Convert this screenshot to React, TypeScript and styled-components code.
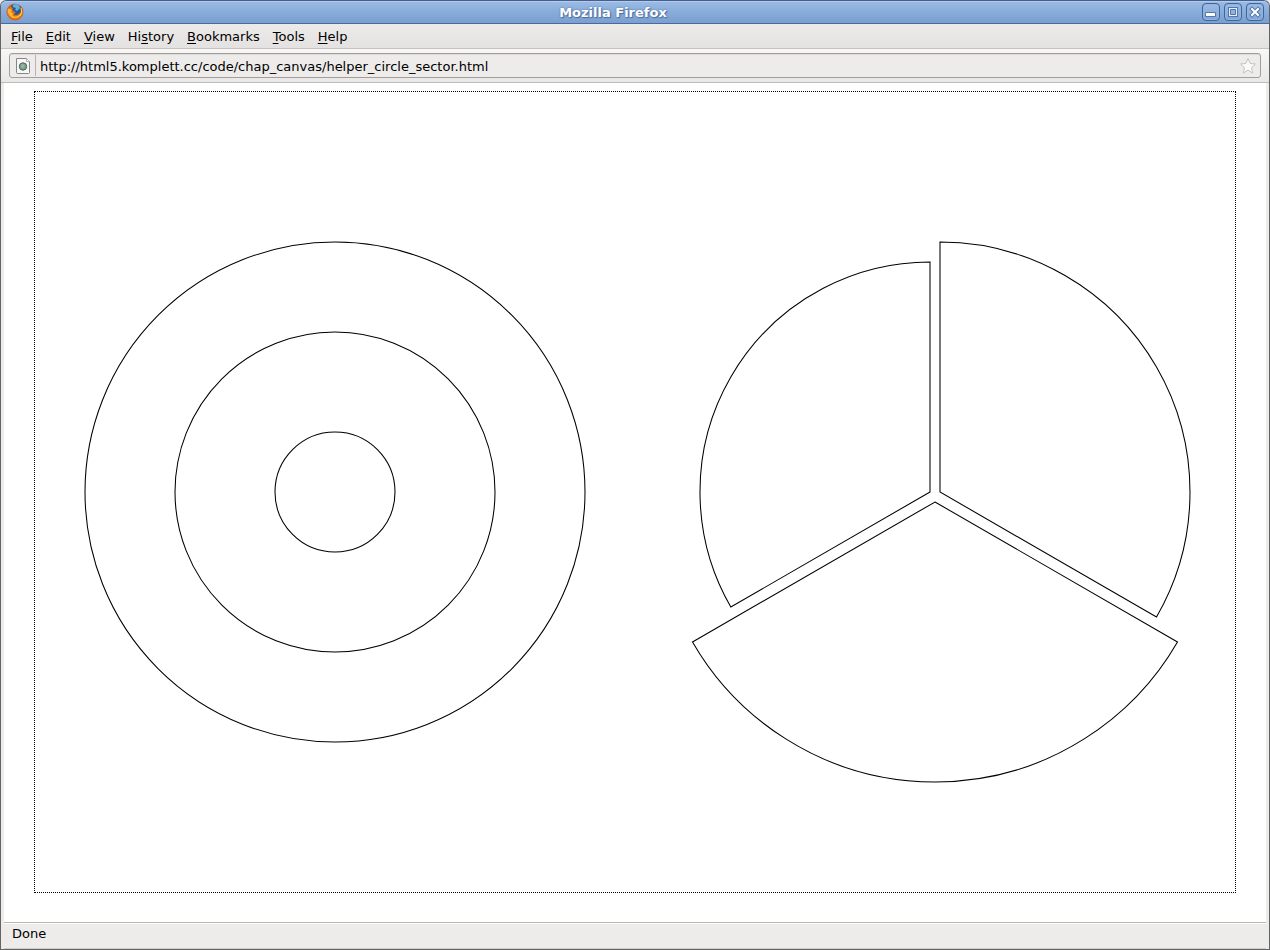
import React from "react";
import styled, { createGlobalStyle } from "styled-components";

const GlobalStyle = createGlobalStyle`
  * { box-sizing: border-box; }
  html, body { margin: 0; padding: 0; }
  body {
    background: #edeceb;
    color: #000;
    font: 13px/16px "DejaVu Sans", Verdana, sans-serif;
  }
`;

const Window = styled.div`
  display: flex;
  flex-direction: column;
  min-height: 100vh;
  background: #edeceb;
  border: 1px solid #646464;
  border-top: 0;
  border-radius: 6px 6px 0 0;
  overflow: hidden;
`;

const TitleBar = styled.header`
  display: flex;
  align-items: center;
  height: 24px;
  margin: 0 -1px;
  padding: 0 5px;
  background: linear-gradient(#9dbbe4, #89aedc 45%, #7a9fd0);
  border: 1px solid #42618e;
  border-bottom-color: #4a6b98;
  border-radius: 6px 6px 0 0;
  box-shadow: inset 0 1px #b4cbec;
`;

const Title = styled.h1`
  flex: 1;
  margin: 0;
  padding-top: 1px;
  font-size: 13px;
  line-height: 16px;
  font-weight: bold;
  text-align: center;
  color: #fff;
  text-shadow: 0 0 2px #4a6d9e, 1px 1px 1px #4a6d9e;
`;

const WindowControls = styled.div`
  display: flex;
  gap: 4px;
`;

const ControlButton = styled.button`
  display: block;
  width: 18px;
  height: 18px;
  padding: 0;
  border: 1px solid #41659a;
  border-radius: 4px;
  background: linear-gradient(#9dbbe4, #7fa5d6);
  box-shadow: inset 0 0 0 1px #94b4df;

  svg { display: block; }
`;

const MenuBar = styled.nav`
  display: flex;
  gap: 13px;
  height: 25px;
  padding: 5px 10px;
  background: linear-gradient(#edebea, #e4e2e0);
  border-bottom: 1px solid #c5c2bf;
`;

const MenuItem = styled.button`
  padding: 0;
  border: 0;
  background: none;
  color: inherit;
  font: inherit;

  u { text-underline-offset: 2px; text-decoration-thickness: 1px; text-decoration-skip-ink: none; }
`;

const Toolbar = styled.div`
  padding: 4px 8px;
  background: linear-gradient(#f8f7f6, #eae8e7);
  border-bottom: 1px solid #bebbb8;
`;

const AddressField = styled.form`
  display: flex;
  align-items: center;
  height: 25px;
  border: 1px solid #a09d9a;
  border-radius: 3px;
  background: #edeceb;
  box-shadow: inset 0 1px #dddbd9;
`;

const SiteIcon = styled.span`
  display: flex;
  align-items: center;
  justify-content: center;
  width: 26px;
  height: 21px;
  border-right: 1px solid #b5b2af;
`;

const AddressInput = styled.input`
  flex: 1;
  min-width: 0;
  height: 22px;
  padding: 2px 4px 0;
  border: 0;
  outline: 0;
  background: transparent;
  color: inherit;
  font: inherit;
`;

const BookmarkButton = styled.button`
  width: 18px;
  height: 18px;
  margin-right: 3px;
  padding: 0;
  border: 0;
  background: none;

  svg { display: block; }
`;

const Page = styled.main`
  flex: 1;
  margin: 0 3px;
  padding: 8px;
  background: #fff;
`;

const Drawing = styled.svg`
  display: block;
  width: 100%;
  max-width: 1202px;
  height: auto;
  margin: 0 auto;
  border: 1px dotted #000;
`;

const StatusBar = styled.footer`
  height: 27px;
  padding: 3px 8px;
  margin: 0 3px;
  background: #edeceb;
  border-top: 1px solid #b8b5b2;
  border-bottom: 1px solid #d0cecb;
  box-shadow: inset 0 1px #fff;
`;

const FirefoxIcon = () => (
  <svg width="18" height="18" viewBox="0 0 18 18" aria-hidden="true">
    <circle cx="9" cy="9" r="8" fill="#d8540c" stroke="#a8441c" strokeWidth="0.6" />
    <circle cx="9.500" cy="7" r="5.500" fill="#245a96" />
    <path d="M7 2q3-2 6 0l1 3-3 3-2-1 1-2-3-1z" fill="#5fb0dc" />
    <path d="M2 4Q0 8 1 11q2 6 8 6 7 0 8-7 0-4-2-6 1 5-2 7-3 2-6 0l3-1-2-2-2-1 1-2-2-1q-1-1-1-3L3 5z" fill="#e86c10" />
    <path d="M2 6q2-1 4 1l-1 2 3 2-2 1q3 3 7 0 3-2 2-6 2 5-2 8-5 3-9-1Q1 10 2 6" fill="#fbb733" />
    <path d="M15 5q2 5-1 8" fill="none" stroke="#fbd65a" />
  </svg>
);

const PageIcon = () => (
  <svg width="16" height="18" viewBox="0 0 16 18" aria-hidden="true">
    <path d="M1.500 1.500h10l3 3v11q0 1-1 1h-11q-1 0-1-1z" fill="#f7f7f6" stroke="#858784" />
    <path d="M11.500 1.500v3h3" fill="#fff" stroke="#b0b2af" />
    <circle cx="8" cy="9.500" r="3.700" fill="#7fa08d" stroke="#4b5f72" />
    <path d="M6 8q2-2 3 0t-1 3q-2 0-2-3" fill="#9bb58c" />
  </svg>
);

const MENUS = [
  ["", "F", "ile"],
  ["", "E", "dit"],
  ["", "V", "iew"],
  ["Hi", "s", "tory"],
  ["", "B", "ookmarks"],
  ["", "T", "ools"],
  ["", "H", "elp"],
];

const RINGS = [250, 160, 60];

const SECTORS = [
  { x: 905, y: 400, r: 250, from: -90, to: 30 },
  { x: 900, y: 410, r: 280, from: 30, to: 150 },
  { x: 895, y: 400, r: 230, from: 150, to: 270 },
];

function sectorPath({ x, y, r, from, to }: (typeof SECTORS)[number]) {
  const point = (deg: number) => {
    const a = (deg * Math.PI) / 180;
    return `${x + r * Math.cos(a)} ${y + r * Math.sin(a)}`;
  };
  return `M${x} ${y}L${point(from)}A${r} ${r} 0 0 1 ${point(to)}Z`;
}

export default function App() {
  return (
    <>
      <GlobalStyle />
      <Window>
        <TitleBar>
          <FirefoxIcon />
          <Title>Mozilla Firefox</Title>
          <WindowControls>
            <ControlButton type="button" aria-label="Minimize">
              <svg width="16" height="16" viewBox="0 0 16 16">
                <path d="M2.500 8.500h10v4h-10z" fill="#fff" stroke="#5377ab" />
              </svg>
            </ControlButton>
            <ControlButton type="button" aria-label="Maximize">
              <svg width="16" height="16" viewBox="0 0 16 16" fill="none">
                <path d="M3 3h10v10H3z" fill="#5377ab" />
                <path d="M4 4h8v8H4z" fill="#e4eefb" />
                <path d="M5.500 5.500h5v5h-5z" fill="#8fb1de" stroke="#5377ab" />
              </svg>
            </ControlButton>
            <ControlButton type="button" aria-label="Close">
              <svg width="16" height="16" viewBox="0 0 16 16" strokeLinecap="square">
                <path d="M5 5l6 6M11 5l-6 6" stroke="#5377ab" strokeWidth="4" />
                <path d="M5 5l6 6M11 5l-6 6" stroke="#fff" strokeWidth="2" />
              </svg>
            </ControlButton>
          </WindowControls>
        </TitleBar>
        <MenuBar>
          {MENUS.map(([before, key, after]) => (
            <MenuItem type="button" key={before + key + after}>
              {before}
              <u>{key}</u>
              {after}
            </MenuItem>
          ))}
        </MenuBar>
        <Toolbar>
          <AddressField>
            <SiteIcon>
              <PageIcon />
            </SiteIcon>
            <AddressInput
              type="text"
              aria-label="Address"
              spellCheck={false}
              defaultValue="http://html5.komplett.cc/code/chap_canvas/helper_circle_sector.html"
            />
            <BookmarkButton type="button" aria-label="Bookmark this page">
              <svg width="18" height="18" viewBox="0 0 18 18">
                <path
                  d="M9 1.500l2.200 5 5.300.5-4 3.700 1.200 5.300L9 13.200 4.300 16l1.200-5.300-4-3.700 5.300-.5z"
                  fill="#fafafa"
                  stroke="#c4c2c0"
                  strokeLinejoin="round"
                />
              </svg>
            </BookmarkButton>
          </AddressField>
        </Toolbar>
        <Page>
          <Drawing
            viewBox="0 0 1200 800"
            fill="none"
            stroke="#000"
            strokeWidth="1.05"
            role="img"
            aria-label="Circles and circle sectors"
          >
            {RINGS.map((r) => (
              <circle key={r} cx="300" cy="400" r={r} />
            ))}
            {SECTORS.map((sector) => (
              <path key={sector.from} d={sectorPath(sector)} />
            ))}
          </Drawing>
        </Page>
        <StatusBar role="status">Done</StatusBar>
      </Window>
    </>
  );
}
